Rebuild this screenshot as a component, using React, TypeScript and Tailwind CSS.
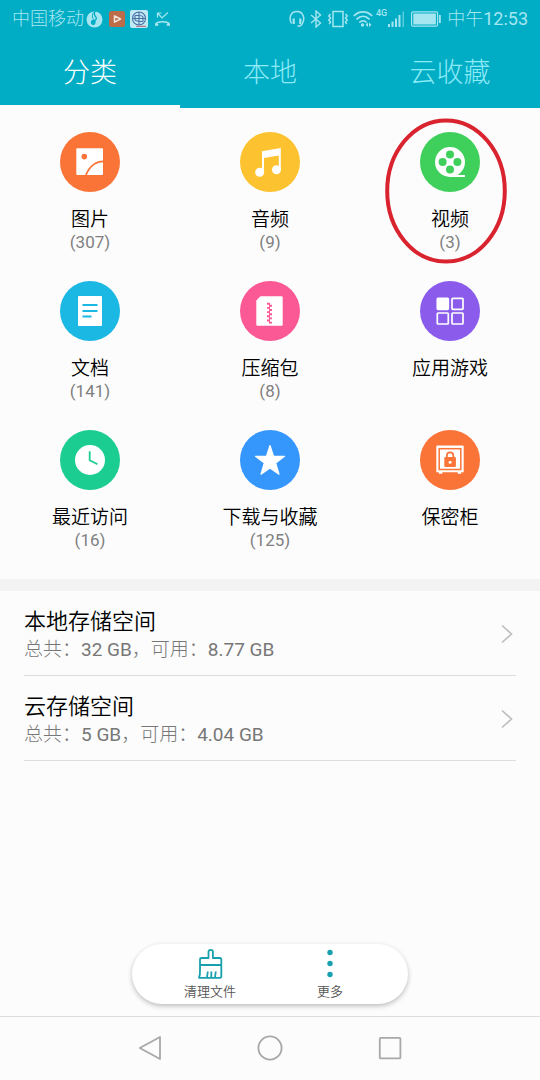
import type { ReactNode } from 'react';

type Category = {
  name: string;
  count?: number;
  color: string;
  icon: ReactNode;
  marked?: boolean;
};

const iconClass = 'size-[60px]';

const categories: Category[] = [
  {
    name: '图片',
    count: 307,
    color: 'bg-[#fa7337]',
    icon: (
      <svg viewBox="0 0 60 60" className={iconClass} aria-hidden="true">
        <rect x="16.3" y="16.3" width="26.7" height="26.7" rx="1" fill="#fff" />
        <circle cx="24.3" cy="24.6" r="2.8" fill="#fa7337" />
        <path d="M25.8 43.5C29 35 34.500 29.600 43.500 29.300" fill="none" stroke="#fa7337" strokeWidth="1.7" />
      </svg>
    ),
  },
  {
    name: '音频',
    count: 9,
    color: 'bg-[#fdc22f]',
    icon: (
      <svg viewBox="0 0 60 60" className={iconClass} aria-hidden="true">
        <path d="M22 19.2 40.800 16V38H38.800V23.500L24 26V40.500H22Z" fill="#fff" />
        <circle cx="19.700" cy="40.200" r="4.500" fill="#fff" />
        <circle cx="36.500" cy="37.700" r="4.500" fill="#fff" />
      </svg>
    ),
  },
  {
    name: '视频',
    count: 3,
    color: 'bg-[#3fcf5b]',
    marked: true,
    icon: (
      <svg viewBox="0 0 60 60" className={iconClass} aria-hidden="true">
        <circle cx="30" cy="30" r="15" fill="#fff" />
        <path d="M30 43H45V45H30Z" fill="#fff" />
        <g fill="#3fcf5b">
          <circle cx="30" cy="22.600" r="4" />
          <circle cx="30" cy="37.400" r="4" />
          <circle cx="22.600" cy="30" r="4" />
          <circle cx="37.400" cy="30" r="4" />
        </g>
      </svg>
    ),
  },
  {
    name: '文档',
    count: 141,
    color: 'bg-[#1bb8e3]',
    icon: (
      <svg viewBox="0 0 60 60" className={iconClass} aria-hidden="true">
        <rect x="18" y="15" width="24" height="30" rx="1" fill="#fff" />
        <path d="M22.500 24H37.500M22.500 30H37.500M22.500 35.500H31.500" stroke="#1bb8e3" strokeWidth="1.800" />
      </svg>
    ),
  },
  {
    name: '压缩包',
    count: 8,
    color: 'bg-[#fb5996]',
    icon: (
      <svg viewBox="0 0 60 60" className={iconClass} aria-hidden="true">
        <path d="M20.500 15.300H41.500Q42.700 15.300 42.700 16.500V43.500Q42.700 44.700 41.500 44.700H17.500Q16.300 44.700 16.300 43.500V19.500Z" fill="#fff" />
        <path
          d="M27 22.700h2.700M29.300 24.800h2.700M27 26.900h2.700M29.300 29h2.700M27 31.100h2.700M29.300 33.200h2.700M27 35.300h2.700M29.300 37.400h2.700M27 39.500h2.700M29.300 41.600h2.700"
          stroke="#fb5996"
          strokeWidth="1.900"
        />
        <path d="M29.500 22V42.500" stroke="#fb5996" strokeWidth="1" />
      </svg>
    ),
  },
  {
    name: '应用游戏',
    color: 'bg-[#8b5cec]',
    icon: (
      <svg viewBox="0 0 60 60" className={iconClass} aria-hidden="true">
        <g fill="none" stroke="#fff" strokeWidth="1.700">
          <rect x="17.300" y="17.300" width="11" height="11" rx="0.800" fill="#fff" />
          <rect x="32" y="17.300" width="11" height="11" rx="0.800" />
          <rect x="17.300" y="32" width="11" height="11" rx="0.800" />
          <rect x="32" y="32" width="11" height="11" rx="0.800" />
        </g>
      </svg>
    ),
  },
  {
    name: '最近访问',
    count: 16,
    color: 'bg-[#1bcd90]',
    icon: (
      <svg viewBox="0 0 60 60" className={iconClass} aria-hidden="true">
        <circle cx="30" cy="30" r="15" fill="#fff" />
        <path d="M29.700 21.300V30.300L37.500 34.200" fill="none" stroke="#1bcd90" strokeWidth="1.800" />
      </svg>
    ),
  },
  {
    name: '下载与收藏',
    count: 125,
    color: 'bg-[#3596fb]',
    icon: (
      <svg viewBox="0 0 60 60" className={iconClass} aria-hidden="true">
        <path
          d="M30 15.500 33.500 26.300H44.500L35.700 32.900 39 44.200 30 37.900 21 44.200 24.300 32.900 15.500 26.300H26.500Z"
          fill="#fff"
          stroke="#fff"
          strokeWidth="1.200"
          strokeLinejoin="round"
        />
      </svg>
    ),
  },
  {
    name: '保密柜',
    color: 'bg-[#fa7337]',
    icon: (
      <svg viewBox="0 0 60 60" className={iconClass} aria-hidden="true">
        <path d="M17.300 15.500H42.700Q43.700 15.500 43.700 16.500V42.200H41.200V43.800H37.700V42.200H22.300V43.800H18.800V42.200H16.300V16.500Q16.300 15.500 17.300 15.500Z" fill="#fff" />
        <rect x="19.200" y="18.700" width="21.600" height="20.800" fill="none" stroke="#fa7337" strokeWidth="1.500" />
        <rect x="24.300" y="27" width="11.600" height="10" rx="1" fill="#fa7337" />
        <path d="M26.900 27.500V25.500a3.200 3.200 0 0 1 6.400 0V27.500" fill="none" stroke="#fa7337" strokeWidth="1.700" />
        <circle cx="30.100" cy="32.200" r="1.500" fill="#fff" />
      </svg>
    ),
  },
];

const storage = [
  { name: '本地存储空间', detail: '总共：32 GB，可用：8.77 GB' },
  { name: '云存储空间', detail: '总共：5 GB，可用：4.04 GB' },
];

const tabs = ['分类', '本地', '云收藏'];

function StatusBar() {
  return (
    <div className="flex h-[38px] items-center justify-between px-3 text-lg leading-6 text-[#a6e6f1]">
      <div className="flex items-center">
        <span>中国移动</span>
        <svg viewBox="0 0 17 18" className="ml-[2px] h-[18px] w-[17px]" aria-hidden="true">
          <circle cx="8.500" cy="9.500" r="8" fill="#a6e6f1" />
          <path d="M9.300 1C8 3 8.200 5 9.500 6.500C10.800 8 10.500 9.800 9 10.300" fill="none" stroke="#00adc5" strokeWidth="1.300" />
          <path d="M9.500 10C7 8.800 4.500 10.500 4.800 12.800C5.100 15.300 8.500 16 9.300 13.500C9.700 12.200 9.800 11 9.500 10Z" fill="#00adc5" />
          <path d="M7.500 2.500C6.200 4.500 6 7 7.300 9" fill="none" stroke="#00adc5" strokeWidth="1" />
        </svg>
        <svg viewBox="0 0 16 16" className="ml-[6px] size-4" aria-hidden="true">
          <rect width="16" height="16" rx="2.500" fill="#bd6c49" />
          <path d="M5.500 4.800V11.200L11.500 8Z" fill="none" stroke="#f3e6df" strokeWidth="1.500" strokeLinejoin="round" />
        </svg>
        <svg viewBox="0 0 18 18" className="ml-[5px] size-[18px]" aria-hidden="true">
          <rect width="18" height="18" rx="2" fill="#bfeaf3" />
          <g fill="none" stroke="#4b6da4" strokeWidth="1.100">
            <circle cx="9" cy="8.500" r="6.500" />
            <path d="M9 2v13M2.500 8.500h13M5 5.500V9.500Q5 11 9 11M13 11.500V7.500Q13 5.500 9 5.500M5 5.500h4M9 11.500h4" />
          </g>
          <path d="M6 16.300h10" stroke="#b75f7a" strokeWidth="1" />
        </svg>
        <svg viewBox="0 0 17 17" className="ml-[6px] size-[17px]" fill="none" stroke="#a6e6f1" aria-hidden="true">
          <path d="M3.500 6.500V2H7.500M3.500 2 8 7 14 1.500" strokeWidth="1.200" />
          <path d="M1.700 14.500C1.500 11 5 10.800 8.500 10.800S15.500 11 15.300 14.500" strokeWidth="1.500" />
          <path d="M1.300 13.700H4.300M12.700 13.700H15.700" strokeWidth="2.200" />
        </svg>
      </div>

      <div className="flex items-center">
        <svg viewBox="0 0 16 18" className="h-[18px] w-4" fill="none" stroke="#a6e6f1" aria-hidden="true">
          <path d="M2.500 13.500C-.5 8 1.500 1.500 8 1.500S15.800 8.500 13.800 12.500C13 15 11.500 16.200 8.500 16.300" strokeWidth="1.500" />
          <path d="M4.700 8.500V14M11.300 8.500V14" strokeWidth="2.200" />
        </svg>
        <svg viewBox="0 0 12 18" className="ml-[5px] h-[18px] w-3" fill="none" stroke="#a6e6f1" strokeWidth="1.400" aria-hidden="true">
          <path d="M1 5 10.500 13 6 17V1L10.500 5 1 13" />
        </svg>
        <svg viewBox="0 0 22 18" className="ml-[5px] h-[18px] w-[22px]" fill="none" stroke="#a6e6f1" strokeWidth="1.500" aria-hidden="true">
          <rect x="6" y="1.500" width="10" height="15" />
          <path d="M3.500 4 1.800 6 3.500 8 1.800 10 3.500 12 2.200 14M18.500 4 20.200 6 18.500 8 20.200 10 18.500 12 19.800 14" />
        </svg>
        <svg viewBox="0 0 20 18" className="ml-1 h-[18px] w-5" fill="none" stroke="#a6e6f1" strokeWidth="1.700" aria-hidden="true">
          <path d="M.8 6C6 .5 14 .5 19.200 6M3.500 9.300C7.500 5.500 12.500 5.500 16.500 9.300M6.300 12.500C8.500 10.300 11.500 10.300 13.700 12.500" />
          <circle cx="9.500" cy="15" r="1.700" fill="#a6e6f1" stroke="none" />
          <path d="M15 12.500V17L12.500 14.800ZM16 12.500V17L18.500 14.800Z" fill="#a6e6f1" stroke="none" />
        </svg>
        <span className="ml-[3px] self-start text-[9px] leading-3 font-medium">4G</span>
        <svg viewBox="0 0 18 18" className="h-[18px] w-[18px]" aria-hidden="true">
          <path d="M1 14h2v3h-2ZM4.500 11.500h2v5.500h-2ZM8 8.500h2v8.500h-2ZM11.500 5h2v12h-2Z" fill="#a6e6f1" />
          <path d="M15.500 1.500h1.500V17h-1.500Z" fill="#5bccdc" />
        </svg>
        <svg viewBox="0 0 31 16" className="ml-[6px] h-4 w-[31px]" aria-hidden="true">
          <rect x=".6" y=".8" width="26" height="14.400" rx="1.500" fill="none" stroke="#a6e6f1" strokeWidth="1.200" />
          <rect x="2.300" y="2.500" width="22.600" height="11" fill="#a6e6f1" />
          <path d="M28 4h1.800v8H28Z" fill="#a6e6f1" />
        </svg>
        <span className="ml-[5px]">中午12:53</span>
      </div>
    </div>
  );
}

function CategoryButton({ category }: { category: Category }) {
  return (
    <button type="button" className="relative flex flex-col items-center pt-6 pb-[5px]">
      <span className={`rounded-full ${category.color}`}>{category.icon}</span>
      <span className="mt-4 text-[19px] leading-6 text-black">{category.name}</span>
      <span className="h-5 text-[17px] leading-5 text-[#808080]">
        {category.count !== undefined && `(${category.count})`}
      </span>
      {category.marked && (
        <svg viewBox="0 0 122 146" className="absolute top-[10px] left-[25px] h-[146px] w-[122px]" aria-hidden="true">
          <ellipse cx="61" cy="73" rx="58.800" ry="70.600" fill="none" stroke="#d9232e" strokeWidth="4" />
        </svg>
      )}
    </button>
  );
}

export default function App() {
  return (
    <div className="flex min-h-screen flex-col bg-[#fcfcfc] font-['Roboto','Noto_Sans_CJK_SC_DemiLight','Noto_Sans_CJK_SC',sans-serif]">
      <header className="bg-[#00adc5] font-['Roboto','Noto_Sans_CJK_SC_Light','Noto_Sans_CJK_SC',sans-serif]">
        <StatusBar />
        <nav className="grid grid-cols-3">
          {tabs.map((tab, i) => (
            <button
              key={tab}
              type="button"
              aria-current={i === 0 ? 'page' : undefined}
              className={
                i === 0
                  ? 'h-[70px] border-b-[3px] border-[#fcfcfc] pt-[2px] text-[27px] leading-9 text-white'
                  : 'h-[70px] border-b-[3px] border-transparent pt-[2px] text-[27px] leading-9 text-[#8deaf7]'
              }
            >
              {tab}
            </button>
          ))}
        </nav>
      </header>

      <main className="flex flex-1 flex-col">
        <section className="grid grid-cols-3 pb-6">
          {categories.map((category) => (
            <CategoryButton key={category.name} category={category} />
          ))}
        </section>

        <div className="h-3 bg-[#f3f3f3]" />

        <section className="px-6">
          {storage.map((item) => (
            <button
              key={item.name}
              type="button"
              className="flex w-full items-center justify-between border-b border-[#dedede] pt-[17px] pb-[11px] text-left"
            >
              <span className="flex flex-col">
                <span className="text-[22px] leading-7 text-black">{item.name}</span>
                <span className="font-['Roboto','Noto_Sans_CJK_SC_Light','Noto_Sans_CJK_SC',sans-serif] text-[19px] leading-7 text-[#777]">
                  {item.detail}
                </span>
              </span>
              <svg viewBox="0 0 16 20" className="mb-1 h-5 w-4" fill="none" stroke="#bdbdbd" strokeWidth="1.600" aria-hidden="true">
                <path d="M2 1.500 11.500 10 2 18.500" />
              </svg>
            </button>
          ))}
        </section>

        <div className="mx-auto mt-auto mb-3 grid h-[60px] w-[276px] grid-cols-2 rounded-full bg-white px-[18px] text-[13px] leading-4 text-[#555] shadow-[0_2px_5px_rgba(0,0,0,0.25)]">
          <button type="button" className="flex flex-col items-center pt-1">
            <svg viewBox="0 0 26 32" className="h-8 w-[26px]" fill="none" stroke="#19a0ae" strokeWidth="1.800" strokeLinejoin="round" aria-hidden="true">
              <path d="M3 11.500Q3 10 4.500 10H11.500V4a2.200 2.200 0 0 1 4.400 0V10H22.800Q24.300 10 24.300 11.500V28Q24.300 29.800 22.800 29.800H2Q3.200 27 3 22ZM3 17H24.300" />
              <path d="M10.800 23.500 10 29.500M14.300 23.500V29.500M18.800 23.500 18 29.500" />
            </svg>
            <span className="mt-1">清理文件</span>
          </button>
          <button type="button" className="flex flex-col items-center pt-1">
            <svg viewBox="0 0 26 32" className="h-8 w-[26px]" fill="#19a0ae" aria-hidden="true">
              <circle cx="13" cy="4.500" r="2.700" />
              <circle cx="13" cy="15.500" r="2.700" />
              <circle cx="13" cy="26.500" r="2.700" />
            </svg>
            <span className="mt-1">更多</span>
          </button>
        </div>
      </main>

      <footer className="flex h-16 items-center justify-center gap-[94px] border-t border-[#dcdcdc] pb-[2px]">
        <button type="button" aria-label="返回">
          <svg viewBox="0 0 26 26" className="size-[26px]" fill="none" stroke="#a8a8a8" strokeWidth="1.800" strokeLinejoin="round" aria-hidden="true">
            <path d="M23 2V24L2.800 13Z" />
          </svg>
        </button>
        <button type="button" aria-label="主页">
          <svg viewBox="0 0 26 26" className="size-[26px]" fill="none" stroke="#a8a8a8" strokeWidth="1.800" aria-hidden="true">
            <circle cx="13" cy="13" r="11.600" />
          </svg>
        </button>
        <button type="button" aria-label="最近任务">
          <svg viewBox="0 0 26 26" className="size-[26px]" fill="none" stroke="#a8a8a8" strokeWidth="1.800" aria-hidden="true">
            <rect x="2.800" y="2.800" width="20.600" height="20.600" rx="1" />
          </svg>
        </button>
      </footer>
    </div>
  );
}
